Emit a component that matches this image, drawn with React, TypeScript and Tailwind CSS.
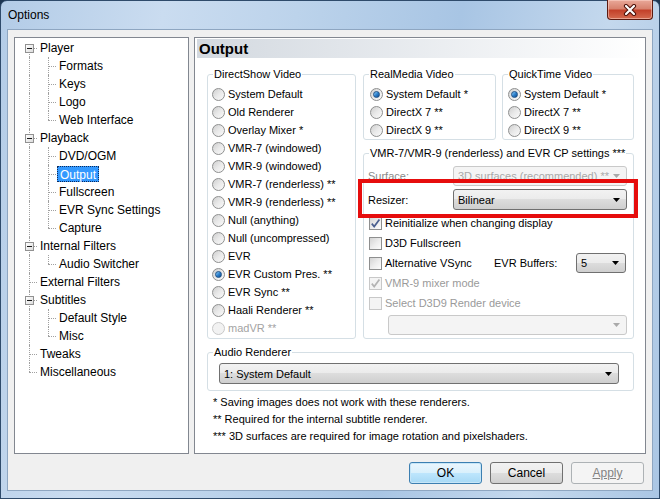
import clsx from 'clsx'
import type { ReactNode } from 'react'

type TreeItem = {
  label: string
  level: 0 | 1
  expander?: boolean
  last?: boolean
  selected?: boolean
}

const treeItems: TreeItem[] = [
  { label: 'Player', level: 0, expander: true },
  { label: 'Formats', level: 1 },
  { label: 'Keys', level: 1 },
  { label: 'Logo', level: 1 },
  { label: 'Web Interface', level: 1, last: true },
  { label: 'Playback', level: 0, expander: true },
  { label: 'DVD/OGM', level: 1 },
  { label: 'Output', level: 1, selected: true },
  { label: 'Fullscreen', level: 1 },
  { label: 'EVR Sync Settings', level: 1 },
  { label: 'Capture', level: 1, last: true },
  { label: 'Internal Filters', level: 0, expander: true },
  { label: 'Audio Switcher', level: 1, last: true },
  { label: 'External Filters', level: 0 },
  { label: 'Subtitles', level: 0, expander: true },
  { label: 'Default Style', level: 1 },
  { label: 'Misc', level: 1, last: true },
  { label: 'Tweaks', level: 0 },
  { label: 'Miscellaneous', level: 0, last: true },
]

const directShow = [
  'System Default',
  'Old Renderer',
  'Overlay Mixer *',
  'VMR-7 (windowed)',
  'VMR-9 (windowed)',
  'VMR-7 (renderless) **',
  'VMR-9 (renderless) **',
  'Null (anything)',
  'Null (uncompressed)',
  'EVR',
  'EVR Custom Pres. **',
  'EVR Sync **',
  'Haali Renderer **',
  'madVR **',
]

const dotted = 'border-dotted border-[#a0a0a0]'

function TreeRow({ item, index }: { item: TreeItem; index: number }) {
  const first = index === 0
  const lastRoot = item.level === 0 && item.last
  return (
    <div className="flex h-[18px] items-center">
      {/* root connector column */}
      <div className="relative h-full w-[23px] shrink-0">
        <div
          className={clsx(
            'absolute left-[14px] border-l',
            dotted,
            first ? 'top-[9px] bottom-0' : lastRoot ? 'top-0 h-[9px]' : 'inset-y-0',
          )}
        />
        {item.level === 0 && (
          <div className={clsx('absolute left-[14px] right-[1px] top-[9px] border-t', dotted)} />
        )}
        {item.expander && (
          <div className="absolute left-[10px] top-[5px] flex h-[9px] w-[9px] items-center justify-center border border-[#919191] bg-gradient-to-br from-white to-[#dcdcdc]">
            <div className="h-px w-[5px] bg-[#1a1a1a]" />
          </div>
        )}
      </div>
      {item.level === 1 && (
        <div className="relative h-full w-[19px] shrink-0">
          <div
            className={clsx(
              'absolute left-[10px] border-l',
              dotted,
              item.last ? 'top-0 h-[9px]' : 'inset-y-0',
            )}
          />
          <div className={clsx('absolute left-[10px] w-[8px] top-[9px] border-t', dotted)} />
        </div>
      )}
      <span
        className={clsx(
          'h-[16px] whitespace-nowrap px-[2px] text-[12px] leading-[16px]',
          item.selected
            ? 'border border-dotted border-[#0c2a5c] bg-[#3399ff] leading-[14px] text-white'
            : 'text-black',
        )}
      >
        {item.label}
      </span>
    </div>
  )
}

function Radio({
  label,
  checked = false,
  disabled = false,
}: {
  label: string
  checked?: boolean
  disabled?: boolean
}) {
  return (
    <div className="flex h-[18px] items-center gap-[3px] whitespace-nowrap">
      <span
        className={clsx(
          'flex h-[13px] w-[13px] shrink-0 items-center justify-center rounded-full border',
          disabled
            ? 'border-[#c8c8c8] bg-[#f2f2f2]'
            : 'border-[#8e8f8f] bg-gradient-to-br from-[#cfcfcf] via-[#e9e9e9] to-[#fbfbfb]',
        )}
      >
        {checked && (
          <span className="h-[7px] w-[7px] rounded-full border border-[#1c4f86] bg-gradient-to-br from-[#8fd0f5] via-[#2f83cf] to-[#0d4a8c]" />
        )}
      </span>
      <span className={disabled ? 'text-[#a3a3a3]' : 'text-black'}>{label}</span>
    </div>
  )
}

function Check({
  label,
  checked = false,
  disabled = false,
  className,
}: {
  label: string
  checked?: boolean
  disabled?: boolean
  className?: string
}) {
  return (
    <div className={clsx('flex h-[20px] items-center gap-[3px] whitespace-nowrap', className)}>
      <span
        className={clsx(
          'relative h-[13px] w-[13px] shrink-0 border',
          disabled
            ? 'border-[#c8c8c8] bg-[#f4f4f4]'
            : 'border-[#8e8f8f] bg-gradient-to-br from-[#d4d4d4] via-[#ececec] to-[#fdfdfd]',
        )}
      >
        {checked && (
          <svg viewBox="0 0 11 11" className="absolute inset-0 h-[11px] w-[11px]">
            <path
              d="M1.8 5.6 L4.2 8.6 L9.4 1.4"
              fill="none"
              stroke={disabled ? '#b4b4b4' : '#4a5f8f'}
              strokeWidth="1.7"
            />
          </svg>
        )}
      </span>
      <span className={disabled ? 'text-[#9a9a9a]' : 'text-black'}>{label}</span>
    </div>
  )
}

function Combo({
  value,
  disabled = false,
  className,
}: {
  value: string
  disabled?: boolean
  className?: string
}) {
  return (
    <div
      className={clsx(
        'flex items-center justify-between rounded-[3px] border pl-[4px] pr-[6px] whitespace-nowrap',
        disabled
          ? 'border-[#c9c9c9] bg-[#f4f4f4] text-[#a9a9a9]'
          : 'border-[#707070] bg-[linear-gradient(#f2f2f2_0%,#ebebeb_50%,#dddddd_50%,#cfcfcf_100%)] text-black',
        className,
      )}
    >
      <span>{value}</span>
      <svg width="7" height="4" viewBox="0 0 7 4">
        <path d="M0 0 H7 L3.5 4 Z" fill={disabled ? '#a9a9a9' : '#000'} />
      </svg>
    </div>
  )
}

function Group({
  title,
  className,
  children,
}: {
  title: string
  className?: string
  children?: ReactNode
}) {
  return (
    <div className={clsx('relative rounded-[3px] border border-[#d5dfe5]', className)}>
      <span className="absolute left-[5px] top-[-8px] whitespace-nowrap bg-white px-[1px] leading-[14px]">
        {title}
      </span>
      {children}
    </div>
  )
}

function Button({
  children,
  variant = 'normal',
}: {
  children: ReactNode
  variant?: 'normal' | 'default' | 'disabled'
}) {
  return (
    <div
      className={clsx(
        'flex h-[22px] w-[73px] items-center justify-center rounded-[3px] border text-[12px]',
        variant === 'default' &&
          'border-[#3c7fb1] bg-[linear-gradient(#eaf6fd_0%,#d9f0fc_50%,#bee6fd_50%,#a7d9f5_100%)] text-black shadow-[inset_0_0_0_1px_#c6e6f8]',
        variant === 'normal' &&
          'border-[#707070] bg-[linear-gradient(#f2f2f2_0%,#ebebeb_50%,#dddddd_50%,#cfcfcf_100%)] text-black',
        variant === 'disabled' && 'border-[#adb2b5] bg-[#f4f4f4] text-[#838383]',
      )}
    >
      <span className={variant === 'disabled' ? 'underline decoration-[#838383]' : ''}>{children}</span>
    </div>
  )
}

function CloseButton() {
  return (
    <div className="absolute right-[6px] top-[-1px] flex h-[20px] w-[46px] items-center justify-center rounded-b-[4px] border border-t-0 border-[#5b1a10] bg-[linear-gradient(#e9a899_0%,#d8836f_45%,#c3412a_55%,#d46a4f_100%)] shadow-[inset_0_0_0_1px_rgba(255,220,210,0.5)]">
      <svg width="14" height="12" viewBox="0 0 14 12">
        <path d="M3 2 L11 10 M11 2 L3 10" stroke="#4c0f07" strokeWidth="4.2" strokeLinecap="round" />
        <path d="M3 2 L11 10 M11 2 L3 10" stroke="#ffffff" strokeWidth="2.2" strokeLinecap="round" />
      </svg>
    </div>
  )
}

export default function App() {
  return (
    <div className="h-[499px] w-[660px] bg-[#1d3652] font-['Liberation_Sans',Arial,sans-serif] text-[11px] leading-[14px] text-black">
      <div className="relative flex h-full w-full flex-col rounded-t-[7px] border border-[#2f4b6b] bg-[linear-gradient(100deg,#b3cce7_0%,#cadcf0_22%,#bcd3eb_40%,#a8c5e4_62%,#c4d8ed_82%,#aac6e4_100%)]">
        <header className="flex h-[28px] shrink-0 items-center pl-[7px] text-[12px] text-black">
          Options
        </header>
        <CloseButton />

        <main className="mx-[6px] mb-[7px] flex flex-1 flex-col border border-[#8ea6c1] bg-[#f0f0f0] pl-[6px] pr-[6px] pt-[7px]">
          <div className="flex h-[417px] gap-[5px]">
            {/* tree */}
            <nav className="w-[175px] shrink-0 border border-[#828790] bg-white pt-[1px]">
              {treeItems.map((item, i) => (
                <TreeRow key={item.label} item={item} index={i} />
              ))}
            </nav>

            {/* page */}
            <section className="flex flex-1 flex-col border border-[#828790] bg-white">
              <div className="mx-[2px] mt-[1px] flex h-[19px] items-center bg-gradient-to-r from-[#d3d9e0] to-white pl-[2px] text-[15px] font-bold">
                Output
              </div>

              <div className="mt-[16px] flex flex-col pl-[12px] pr-[11px]">
                <div className="flex gap-[7px]">
                  <Group title="DirectShow Video" className="h-[265px] w-[149px] shrink-0 pl-[4px] pt-[10px]">
                    {directShow.map(r => (
                      <Radio
                        key={r}
                        label={r}
                        checked={r === 'EVR Custom Pres. **'}
                        disabled={r === 'madVR **'}
                      />
                    ))}
                  </Group>

                  <div className="flex flex-1 flex-col">
                    <div className="flex gap-[6px]">
                      <Group title="RealMedia Video" className="h-[66px] flex-1 pl-[6px] pt-[10px]">
                        <Radio label="System Default *" checked />
                        <Radio label="DirectX 7 **" />
                        <Radio label="DirectX 9 **" />
                      </Group>
                      <Group title="QuickTime Video" className="h-[66px] flex-1 pl-[5px] pt-[10px]">
                        <Radio label="System Default *" checked />
                        <Radio label="DirectX 7 **" />
                        <Radio label="DirectX 9 **" />
                      </Group>
                    </div>

                    <Group
                      title="VMR-7/VMR-9 (renderless) and EVR CP settings ***"
                      className="mt-[13px] flex h-[186px] flex-col pl-[4px] pr-[6px] pt-[12px]"
                    >
                      <div className="flex h-[20px] items-center">
                        <span className="w-[85px] shrink-0 text-[#8a8a8a]">Surface:</span>
                        <Combo disabled value="3D surfaces (recommended) **" className="h-[20px] flex-1" />
                      </div>
                      <div className="mt-[3px] flex h-[21px] items-center">
                        <span className="w-[85px] shrink-0">Resizer:</span>
                        <Combo value="Bilinear" className="h-[21px] flex-1" />
                      </div>
                      <Check label="Reinitialize when changing display" checked className="ml-[1px] mt-[3px]" />
                      <Check label="D3D Fullscreen" className="ml-[1px]" />
                      <div className="ml-[1px] flex h-[20px] items-center">
                        <Check label="Alternative VSync" className="w-[125px] shrink-0" />
                        <span className="w-[82px] shrink-0">EVR Buffers:</span>
                        <Combo value="5" className="h-[20px] w-[50px]" />
                      </div>
                      <Check label="VMR-9 mixer mode" checked disabled className="ml-[1px]" />
                      <Check label="Select D3D9 Render device" disabled className="ml-[1px]" />
                      <Combo disabled value="" className="ml-[20px] mt-[2px] h-[20px]" />

                      <div className="pointer-events-none absolute left-[-6px] top-[25px] h-[39px] w-[280px] border-[4px] border-[#e60d0d]" />
                    </Group>
                  </div>
                </div>

                <Group title="Audio Renderer" className="mt-[13px] h-[39px] pl-[11px] pr-[14px] pt-[10px]">
                  <Combo value="1: System Default" className="h-[21px]" />
                </Group>

                <div className="mt-[3px] pl-[6px] leading-[17px]">
                  <p>* Saving images does not work with these renderers.</p>
                  <p>** Required for the internal subtitle renderer.</p>
                  <p>*** 3D surfaces are required for image rotation and pixelshaders.</p>
                </div>
              </div>
            </section>
          </div>

          <div className="mt-[8px] flex justify-end gap-[8px] pr-[2px]">
            <Button variant="default">OK</Button>
            <Button>Cancel</Button>
            <Button variant="disabled">Apply</Button>
          </div>
        </main>
      </div>
    </div>
  )
}
